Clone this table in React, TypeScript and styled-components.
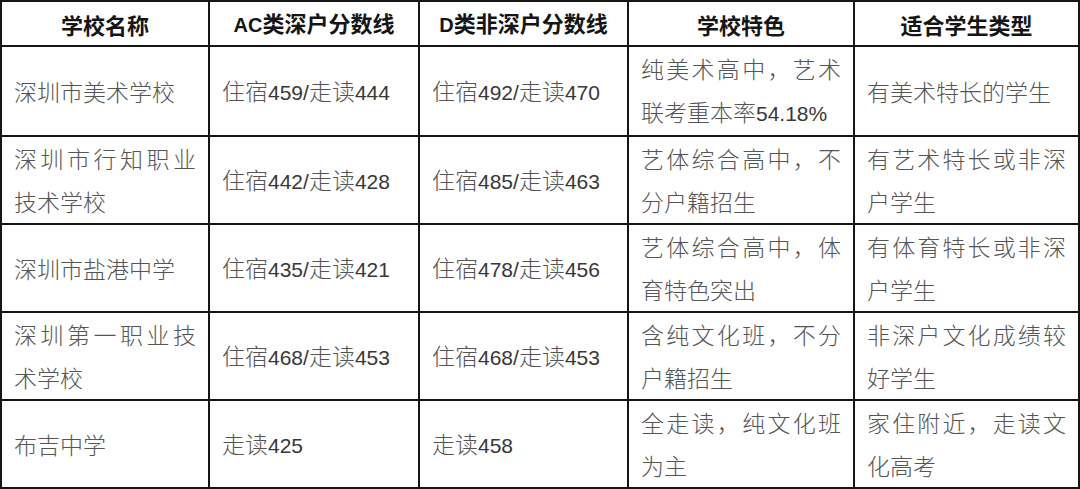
import React from 'react';
import styled, { createGlobalStyle } from 'styled-components';

type Row = {
  name: string;
  ac: string;
  d: string;
  feature: string;
  suited: string;
};

const columns = ['学校名称', 'AC类深户分数线', 'D类非深户分数线', '学校特色', '适合学生类型'];
const widths = [208, 210, 209, 226, 225];

const rows: Row[] = [
  {
    name: '深圳市美术学校',
    ac: '住宿459/走读444',
    d: '住宿492/走读470',
    feature: '纯美术高中，艺术联考重本率54.18%',
    suited: '有美术特长的学生',
  },
  {
    name: '深圳市行知职业技术学校',
    ac: '住宿442/走读428',
    d: '住宿485/走读463',
    feature: '艺体综合高中，不分户籍招生',
    suited: '有艺术特长或非深户学生',
  },
  {
    name: '深圳市盐港中学',
    ac: '住宿435/走读421',
    d: '住宿478/走读456',
    feature: '艺体综合高中，体育特色突出',
    suited: '有体育特长或非深户学生',
  },
  {
    name: '深圳第一职业技术学校',
    ac: '住宿468/走读453',
    d: '住宿468/走读453',
    feature: '含纯文化班，不分户籍招生',
    suited: '非深户文化成绩较好学生',
  },
  {
    name: '布吉中学',
    ac: '走读425',
    d: '走读458',
    feature: '全走读，纯文化班为主',
    suited: '家住附近，走读文化高考',
  },
];

const GlobalStyle = createGlobalStyle`
  html, body {
    margin: 0;
    padding: 0;
    background: #fff;
  }
  body {
    font-family: "Noto Sans CJK SC", "Noto Sans", sans-serif;
  }
`;

const Table = styled.table`
  width: 1078px;
  table-layout: fixed;
  border-collapse: collapse;
  border: 2px solid #161616;
  background: #fff;
`;

const HeadCell = styled.th`
  border: 2px solid #161616;
  padding: 0 6px;
  height: 40px;
  line-height: 40px;
  font-size: 22px;
  font-weight: 700;
  color: #151515;
  text-align: center;
  white-space: nowrap;
`;

const Cell = styled.td`
  border: 2px solid #161616;
  padding: 0 12px;
  height: 86px;
  line-height: 43px;
  font-size: 23px;
  font-weight: 300;
  color: #555;
  text-align: justify;
  vertical-align: middle;
  word-break: break-all;
`;

const Latin = styled.span<{ $bold?: boolean }>`
  font-family: "Liberation Sans", Arial, sans-serif;
  font-size: ${(p) => (p.$bold ? '20px' : '21px')};
  font-weight: ${(p) => (p.$bold ? 700 : 400)};
  color: ${(p) => (p.$bold ? '#151515' : '#383838')};
  vertical-align: baseline;
`;

// latin runs are set a bit smaller so they keep the narrow look of the original
const withLatin = (text: string, bold?: boolean) =>
  text.split(/([A-Za-z0-9./%]+)/).map((part, i) =>
    /^[A-Za-z0-9./%]+$/.test(part) ? (
      <Latin key={i} $bold={bold}>
        {part}
      </Latin>
    ) : (
      <React.Fragment key={i}>{part}</React.Fragment>
    )
  );

const App: React.FC = () => {
  return (
    <>
      <GlobalStyle />
      <Table>
        <colgroup>
          {widths.map((w, i) => (
            <col key={i} style={{ width: w }} />
          ))}
        </colgroup>
        <thead>
          <tr>
            {columns.map((c) => (
              <HeadCell key={c}>{withLatin(c, true)}</HeadCell>
            ))}
          </tr>
        </thead>
        <tbody>
          {rows.map((row) => (
            <tr key={row.name}>
              <Cell>{row.name}</Cell>
              <Cell>{withLatin(row.ac)}</Cell>
              <Cell>{withLatin(row.d)}</Cell>
              <Cell>{withLatin(row.feature)}</Cell>
              <Cell>{row.suited}</Cell>
            </tr>
          ))}
        </tbody>
      </Table>
    </>
  );
};

export default App;
